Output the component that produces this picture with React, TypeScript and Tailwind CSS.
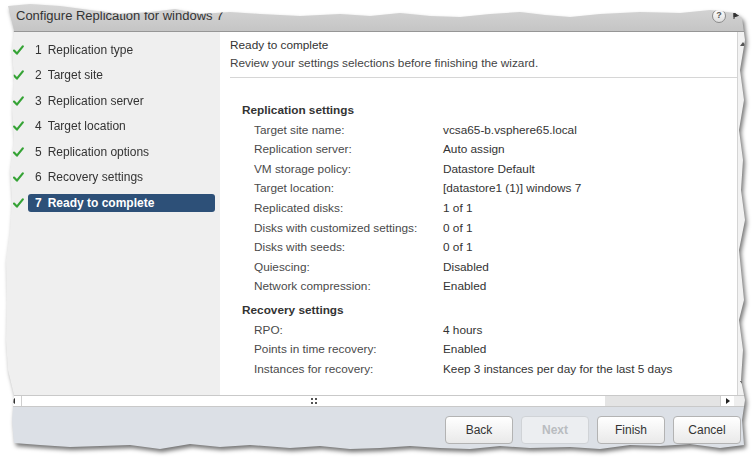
import React from "react";

const steps = [
  { id: 1, label: "Replication type" },
  { id: 2, label: "Target site" },
  { id: 3, label: "Replication server" },
  { id: 4, label: "Target location" },
  { id: 5, label: "Replication options" },
  { id: 6, label: "Recovery settings" },
  { id: 7, label: "Ready to complete" },
];

const replication = [
  ["Target site name:", "vcsa65-b.vsphere65.local"],
  ["Replication server:", "Auto assign"],
  ["VM storage policy:", "Datastore Default"],
  ["Target location:", "[datastore1 (1)] windows 7"],
  ["Replicated disks:", "1 of 1"],
  ["Disks with customized settings:", "0 of 1"],
  ["Disks with seeds:", "0 of 1"],
  ["Quiescing:", "Disabled"],
  ["Network compression:", "Enabled"],
];

const recovery = [
  ["RPO:", "4 hours"],
  ["Points in time recovery:", "Enabled"],
  ["Instances for recovery:", "Keep 3 instances per day for the last 5 days"],
];

function Check() {
  return (
    <svg width="11" height="10" viewBox="0 0 11 10">
      <path d="M1 5.6 L3.9 8.6 L9.8 1.4" fill="none" stroke="#35a335" strokeWidth="2.2" strokeLinecap="round" strokeLinejoin="round" />
    </svg>
  );
}

function Section({ title, rows }: { title: string; rows: string[][] }) {
  return (
    <div className="pl-[22px]">
      <div className="h-[19.6px] leading-[19.6px] font-bold text-[#333]">{title}</div>
      {rows.map(([k, v]) => (
        <div key={k} className="flex h-[19.6px] leading-[19.6px] pl-[12px]">
          <span className="w-[189px] text-[#4a4a4a]">{k}</span>
          <span className="text-[#333]">{v}</span>
        </div>
      ))}
    </div>
  );
}

function Button({ label, disabled }: { label: string; disabled?: boolean }) {
  return (
    <button
      className={`w-[68px] h-[28px] rounded-[4px] border text-[12px] ${
        disabled
          ? "border-[#d0d3d7] bg-[#eceef1] text-[#b9bcc0] font-bold"
          : "border-[#b3b3b3] bg-gradient-to-b from-white to-[#e9e9e9] text-[#333]"
      }`}
    >
      {label}
    </button>
  );
}

export default function App() {
  const current_step = 7;
  return (
    <div className="w-[756px] h-[461px] bg-white overflow-hidden font-['Liberation_Sans',Arial,sans-serif] text-[12px]">
      <div className="w-full h-full [filter:drop-shadow(2px_3px_2px_rgba(0,0,0,0.55))]">
        <div className="w-full h-full [clip-path:polygon(8px_6px,30px_4px,60px_6px,90px_10px,120px_14px,150px_12px,175px_9px,200px_14px,230px_12px,260px_14px,300px_16px,340px_14px,370px_16px,400px_13px,430px_16px,460px_17px,490px_14px,520px_12px,545px_15px,570px_17px,600px_14px,640px_12px,680px_13px,710px_10px,735px_13px,742px_18px,745px_40px,740px_70px,744px_100px,739px_130px,743px_160px,741px_190px,745px_220px,739px_250px,742px_280px,744px_300px,739px_320px,743px_350px,741px_380px,745px_400px,742px_420px,744px_445px,720px_448px,690px_444px,660px_446px,630px_445px,600px_449px,570px_447px,530px_448px,500px_446px,470px_449px,440px_448px,410px_446px,380px_448px,350px_449px,320px_446px,290px_448px,250px_445px,220px_447px,190px_444px,160px_449px,130px_445px,100px_446px,70px_447px,40px_445px,14px_443px,12px_420px,14px_395px,8px_370px,6px_340px,7px_300px,6px_260px,10px_230px,12px_200px,10px_170px,14px_140px,12px_110px,14px_80px,12px_50px,14px_30px)]">
          <div className="ml-[5px] w-[742px] h-[452px] flex flex-col">
            {/* title bar */}
            <div className="h-[32px] shrink-0 flex items-center justify-between pl-[11px] pr-[6px] bg-gradient-to-b from-[#d9d9d9] to-[#c5c5c5] border-b border-[#969696]">
              <span className="text-[13px] text-[#333]">Configure Replication for windows 7</span>
              <div className="flex items-center gap-[7px]">
                <div className="w-[14px] h-[14px] rounded-full border border-[#8a8a8a] bg-gradient-to-b from-white to-[#dedede] flex items-center justify-center text-[9px] font-bold text-[#555] leading-none">?</div>
                <svg width="8" height="8" viewBox="0 0 8 8">
                  <path d="M1 1 L7 3 L1 5 Z M1 1 L1 7" fill="#333" stroke="#333" strokeWidth="1" />
                </svg>
              </div>
            </div>

            {/* body */}
            <div className="h-[363px] shrink-0 flex">
              <div className="w-[215px] bg-[#efefef] pt-[5px]">
                {steps.map((step) => {
                  const isActive = step.id === current_step;
                  return (
                    <div key={step.id} className="h-[25.5px] flex items-center">
                      <div className="ml-[8px] w-[11px] flex items-center">
                        <Check />
                      </div>
                      <div
                        className={`ml-[4px] w-[187px] h-[18px] pl-[7px] flex items-center rounded-[3px] ${
                          isActive ? "bg-[#2d5078] text-white font-bold" : "text-[#333]"
                        }`}
                      >
                        <span>{step.id}</span>
                        <span className="ml-[6px]">{step.label}</span>
                      </div>
                    </div>
                  );
                })}
              </div>

              <div className="flex-1 bg-white flex text-[11.8px]">
                <div className="flex-1">
                  <div className="pl-[10px] pt-[4px]">
                    <div className="h-[18px] leading-[18px] text-[#333]">Ready to complete</div>
                    <div className="h-[18px] leading-[18px] text-[#444]">
                      Review your settings selections before finishing the wizard.
                    </div>
                    <div className="mt-[5px] border-t border-[#d6d6d6]"></div>
                  </div>
                  <div className="mt-[23px]">
                    <Section title="Replication settings" rows={replication} />
                    <div className="mt-[4px]">
                      <Section title="Recovery settings" rows={recovery} />
                    </div>
                  </div>
                </div>
                {/* vertical scrollbar */}
                <div className="w-[10px] bg-[#f2f2f2] border-l border-[#d4d4d4] flex flex-col justify-between items-center py-[10px]">
                  <svg width="6" height="4" viewBox="0 0 6 4">
                    <path d="M0 4 L3 0 L6 4 Z" fill="#555" />
                  </svg>
                  <svg width="6" height="4" viewBox="0 0 6 4">
                    <path d="M0 0 L3 4 L6 0 Z" fill="#333" />
                  </svg>
                </div>
              </div>
            </div>

            {/* horizontal scrollbar */}
            <div className="h-[12px] shrink-0 flex border-y border-[#c9c9c9] bg-white">
              <div className="w-[17px] flex items-center justify-end pr-[6px] border-r border-[#cfcfcf]">
                <svg width="4" height="6" viewBox="0 0 4 6">
                  <path d="M4 0 L0 3 L4 6 Z" fill="#333" />
                </svg>
              </div>
              <div className="w-[583px] flex items-center justify-center bg-white">
                <div className="grid grid-cols-2 gap-[2px]">
                  <span className="w-[2px] h-[2px] bg-[#555]"></span>
                  <span className="w-[2px] h-[2px] bg-[#555]"></span>
                  <span className="w-[2px] h-[2px] bg-[#555]"></span>
                  <span className="w-[2px] h-[2px] bg-[#555]"></span>
                </div>
              </div>
              <div className="w-[115px] bg-[#e4e4e4]"></div>
              <div className="w-[14px] flex items-center justify-center border-l border-[#cfcfcf] bg-white">
                <svg width="4" height="6" viewBox="0 0 4 6">
                  <path d="M0 0 L4 3 L0 6 Z" fill="#222" />
                </svg>
              </div>
              <div className="flex-1 bg-[#eeeeee]"></div>
            </div>

            {/* footer */}
            <div className="flex-1 bg-[#dce0e6] flex justify-end items-start gap-[8px] pt-[9px] pr-[6px]">
              <Button label="Back" />
              <Button label="Next" disabled />
              <Button label="Finish" />
              <Button label="Cancel" />
            </div>
          </div>
        </div>
      </div>
    </div>
  );
}
